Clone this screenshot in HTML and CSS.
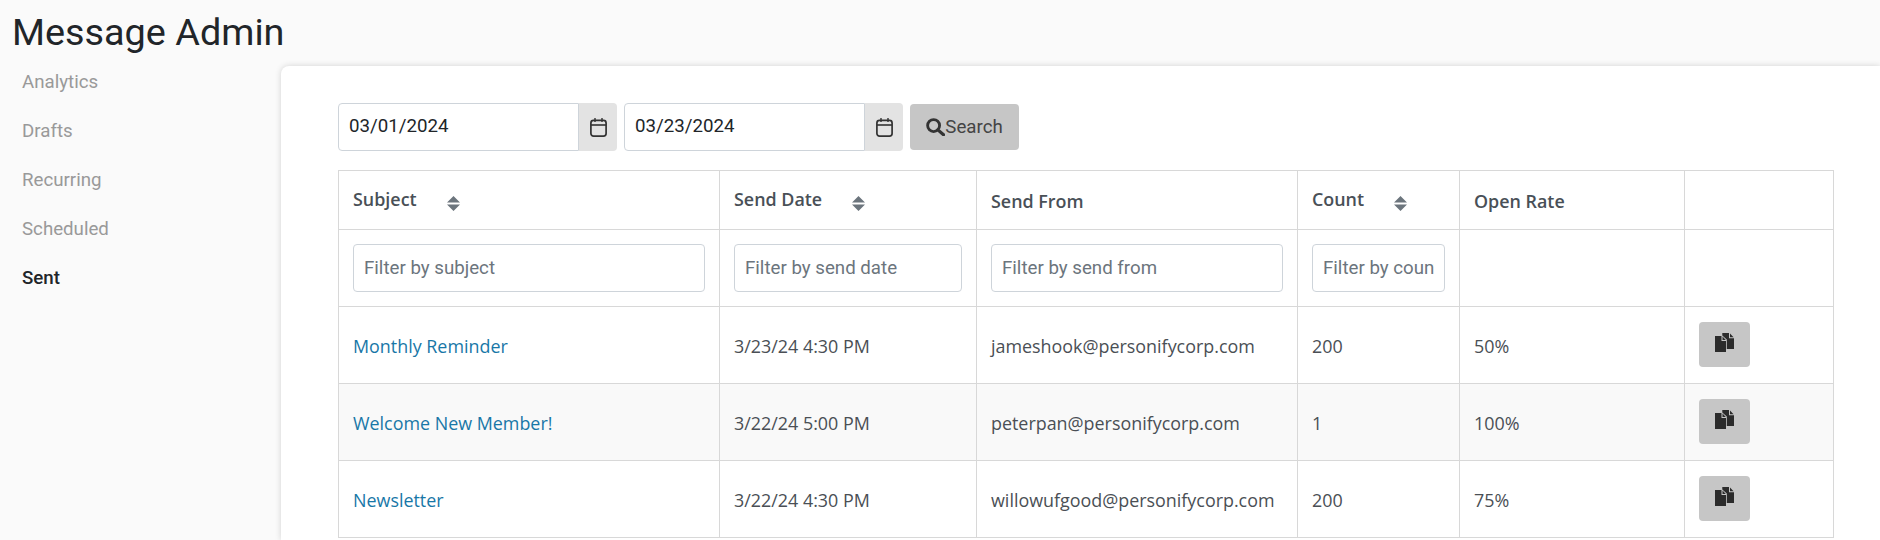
FILE: index.html
```html
<!DOCTYPE html>
<html lang="en">
<head>
<meta charset="utf-8">
<title>Message Admin</title>
<link rel="stylesheet" href="styles.css">
</head>
<body>
<svg class="defs" width="0" height="0" aria-hidden="true">
  <symbol id="cal" viewBox="0 0 17 19"><path d="M5 0v4M12 0v4" fill="none" stroke="currentColor" stroke-width="1.400"/><rect x="0.900" y="2.400" width="15.200" height="15.700" rx="2.600" fill="none" stroke="currentColor" stroke-width="1.700"/><path d="M1 7h15" stroke="currentColor" stroke-width="1.600"/></symbol>
  <symbol id="sort" viewBox="0 0 13 15"><path d="M6.500 0 13 6.400H0zM0 8.600h13L6.500 15z" fill="#6c757d"/></symbol>
  <symbol id="copy" viewBox="0 0 19 19"><path d="M7.300 0H14v5.200h5V16h-7.200V6.600L7.300 2.400z" fill="#2b2b2b"/><path d="M15 .6 18.600 4.300H15z" fill="#2b2b2b"/><path d="M0 3h6.500v5h4.500v11H0z" fill="#2b2b2b"/><path d="M7.500 3.400 10.800 7H7.500z" fill="#2b2b2b"/></symbol>
</svg>
<h1 class="title">Message Admin</h1>
<div class="layout">
  <nav class="side">
    <a class="side-link" href="#">Analytics</a>
    <a class="side-link" href="#">Drafts</a>
    <a class="side-link" href="#">Recurring</a>
    <a class="side-link" href="#">Scheduled</a>
    <a class="side-link active" href="#">Sent</a>
  </nav>
  <main class="card">
    <form class="search">
      <div class="date">
        <input class="date-input" type="text" value="03/01/2024">
        <span class="date-addon"><svg class="cal"><use href="#cal"/></svg></span>
      </div>
      <div class="date">
        <input class="date-input" type="text" value="03/23/2024">
        <span class="date-addon"><svg class="cal"><use href="#cal"/></svg></span>
      </div>
      <button class="search-btn" type="button">
        <svg class="mag" viewBox="0 0 20 19"><circle cx="8" cy="8" r="6.300" fill="none" stroke="#333" stroke-width="3"/><path d="M12.500 12.500 18.500 17.700" stroke="#333" stroke-width="3.400" stroke-linecap="round"/></svg>Search
      </button>
    </form>
    <table class="grid">
      <colgroup>
        <col class="c1"><col class="c2"><col class="c3"><col class="c4"><col class="c5"><col class="c6">
      </colgroup>
      <thead>
        <tr class="head-row">
          <th class="sortable"><span class="th-label">Subject</span><svg class="sort"><use href="#sort"/></svg></th>
          <th class="sortable"><span class="th-label">Send Date</span><svg class="sort"><use href="#sort"/></svg></th>
          <th>Send From</th>
          <th class="sortable"><span class="th-label">Count</span><svg class="sort"><use href="#sort"/></svg></th>
          <th>Open Rate</th>
          <th></th>
        </tr>
        <tr class="filter-row">
          <th><input class="filter" type="text" placeholder="Filter by subject"></th>
          <th><input class="filter" type="text" placeholder="Filter by send date"></th>
          <th><input class="filter" type="text" placeholder="Filter by send from"></th>
          <th><input class="filter" type="text" placeholder="Filter by count"></th>
          <th></th>
          <th></th>
        </tr>
      </thead>
      <tbody>
        <tr>
          <td><a class="subject" href="#">Monthly Reminder</a></td>
          <td>3/23/24 4:30 PM</td>
          <td>jameshook@personifycorp.com</td>
          <td>200</td>
          <td>50%</td>
          <td class="action"><button class="copy-btn" type="button"><svg class="copy"><use href="#copy"/></svg></button></td>
        </tr>
        <tr class="alt">
          <td><a class="subject" href="#">Welcome New Member!</a></td>
          <td>3/22/24 5:00 PM</td>
          <td>peterpan@personifycorp.com</td>
          <td>1</td>
          <td>100%</td>
          <td class="action"><button class="copy-btn" type="button"><svg class="copy"><use href="#copy"/></svg></button></td>
        </tr>
        <tr>
          <td><a class="subject" href="#">Newsletter</a></td>
          <td>3/22/24 4:30 PM</td>
          <td>willowufgood@personifycorp.com</td>
          <td>200</td>
          <td>75%</td>
          <td class="action"><button class="copy-btn" type="button"><svg class="copy"><use href="#copy"/></svg></button></td>
        </tr>
      </tbody>
    </table>
  </main>
</div>
</body>
</html>
```
FILE: styles.css
```css
* { box-sizing: border-box; }
html { height: 100%; overflow: hidden; }
body { height: 100%; margin: 0; background: #fafafa; color: #212529; font-family: Roboto, "Liberation Sans", sans-serif; overflow: hidden; }
.defs { position: absolute; }
.title { margin: 0; height: 66px; padding: 10px 0 0 12px; font-size: 37.8px; line-height: 44px; font-weight: 400; color: #212529; }
.layout { display: grid; grid-template-columns: 281px 1fr; height: 474px; }
.side { display: flex; flex-direction: column; padding-left: 22px; }
.side-link { height: 49px; line-height: 33px; font-size: 18.7px; color: #999; text-decoration: none; }
.side-link.active { color: #212529; font-weight: 500; }
.card { background: #fff; border-radius: 8px 0 0 0; box-shadow: 0 0 6px rgba(0,0,0,.16); padding: 37px 45px 0 57px; }
.search { display: flex; align-items: center; height: 48px; gap: 7px; margin-bottom: 19px; }
.date { display: flex; height: 48px; width: 279px; }
.date-input { width: 241px; height: 48px; border: 1px solid #ced4da; border-radius: 4px 0 0 4px; padding: 0 10px 2px; font: 18.7px Roboto, sans-serif; color: #212529; background: #fff; outline: 0; }
.date-addon { flex: 1; display: flex; align-items: center; justify-content: center; background: #e3e3e3; border-radius: 0 4px 4px 0; }
.cal { width: 17px; height: 19px; color: #333; }
.search-btn { width: 109px; height: 46px; display: flex; align-items: center; justify-content: center; border: 0; border-radius: 4px; background: #c6c6c6; color: #444; font: 18.7px Roboto, sans-serif; padding: 0; }
.mag { width: 19px; height: 18px; }
.grid { border-collapse: collapse; table-layout: fixed; width: 1495px; font-family: "Open Sans", "Noto Sans", sans-serif; font-size: 17.9px; color: #4a4f55; }
.c1 { width: 381px; } .c2 { width: 257px; } .c3 { width: 321px; } .c4 { width: 162px; } .c5 { width: 225px; } .c6 { width: 149px; }
th, td { border: 1px solid #d8d8d8; padding: 2px 14px 0; text-align: left; vertical-align: middle; }
th { font-weight: 600; color: #495057; }
.head-row { height: 59px; }
.filter-row { height: 77px; }
.filter-row th { padding-top: 0; }
tbody tr { height: 77px; }
.alt { background: #f9f9f9; }
.sortable { white-space: nowrap; }
.th-label { position: relative; top: -2px; }
.sort { width: 13px; height: 15px; margin-left: 30px; vertical-align: -3px; }
.filter { width: 100%; height: 48px; border: 1px solid #ced4da; border-radius: 4px; padding: 0 10px; font: 18.7px Roboto, sans-serif; color: #333; background: #fff; outline: 0; }
.filter::placeholder { color: #6c757d; opacity: 1; }
.subject { color: #1877a7; text-decoration: none; }
td.action { padding: 0 14px 2px; }
.copy-btn { width: 51px; height: 45px; display: flex; align-items: center; justify-content: center; border: 0; border-radius: 4px; background: #c6c6c6; padding: 0 0 4px; }
.copy { width: 19px; height: 19px; }
```
